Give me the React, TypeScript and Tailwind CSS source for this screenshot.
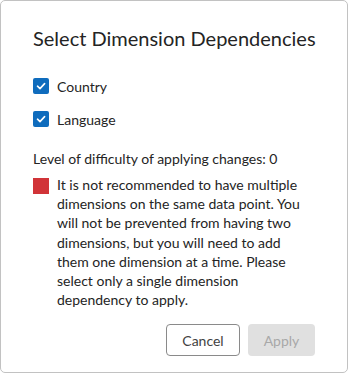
import React from "react";

const Check: React.FC<{ label: string }> = ({ label }) => (
  <label className="flex items-center gap-2 h-5">
    <span className="flex items-center justify-center w-4 h-4 rounded-[2px] bg-[#0f6cbd]">
      <svg width="12" height="12" viewBox="0 0 12 12" fill="none">
        <path d="M2.5 6.2 L5 8.6 L9.6 3.6" stroke="white" strokeWidth="1.6" strokeLinecap="round" strokeLinejoin="round" />
      </svg>
    </span>
    <span>{label}</span>
  </label>
);

export default function App() {
  return (
    <div
      className="w-[348px] h-[373px] bg-white border border-[#c2c2c2] rounded-[5px] text-[#242424] text-[14px] pl-[32px] pr-[32px] pt-[23px] flex flex-col"
      style={{ fontFamily: '"Segoe UI", Lato, "Noto Sans", sans-serif' }}
    >
      <h2 className="text-[20px] leading-[28px] font-normal whitespace-nowrap">Select Dimension Dependencies</h2>

      <div className="mt-[24px] flex flex-col gap-[13px]">
        <Check label="Country" />
        <Check label="Language" />
      </div>

      <p className="mt-[20px] leading-[20px]">Level of difficulty of applying changes: 0</p>

      <div className="mt-[6px] flex gap-2">
        <span className="w-4 h-4 shrink-0 bg-[#d13438] mt-[3px]" />
        <p className="leading-[19.2px] pr-[12px]">
          It is not recommended to have multiple dimensions on the same data point. You will not be prevented
          from having two dimensions, but you will need to add them one dimension at a time. Please select only a
          single dimension dependency to apply.
        </p>
      </div>

      <div className="mt-[15px] flex justify-end gap-2">
        <button className="w-[74px] h-[32px] border border-[#8a8a8a] rounded-[4px] bg-white text-[#424242]">
          Cancel
        </button>
        <button disabled className="w-[67px] h-[32px] rounded-[4px] bg-[#e0e0e0] text-[#a8a8a8]">
          Apply
        </button>
      </div>
    </div>
  );
}
